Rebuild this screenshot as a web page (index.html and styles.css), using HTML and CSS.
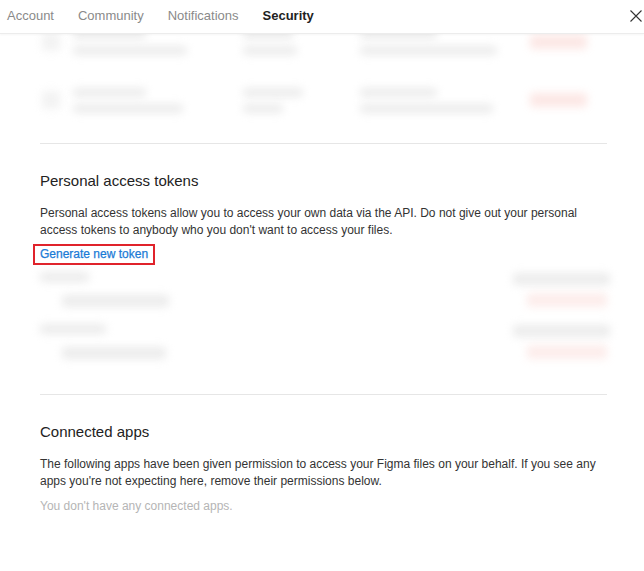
FILE: index.html
```html
<!DOCTYPE html>
<html>
<head>
  <title>Settings - Security</title>
  <link rel="stylesheet" href="styles.css">
</head>
<body>
  <header class="topbar">
    <nav class="tabs">
      <a class="tab">Account</a>
      <a class="tab">Community</a>
      <a class="tab">Notifications</a>
      <a class="tab active">Security</a>
    </nav>
    <button class="close" aria-label="Close">
      <svg width="12" height="12" viewBox="0 0 12 12">
        <path d="M0.5 0.5 L11.5 11.5 M11.5 0.5 L0.5 11.5" stroke="#333" stroke-width="1.1" fill="none"/>
      </svg>
    </button>
  </header>

  <main class="scroller">
    <div class="content">
      <!-- login sessions, blurred in the capture -->
      <div class="sessions">
        <div class="session-row">
          <div class="cell first">
            <span class="blob icon"></span>
            <div class="lines">
              <span class="blob w73"></span>
              <span class="blob w114"></span>
            </div>
          </div>
          <div class="cell">
            <div class="lines">
              <span class="blob w50"></span>
              <span class="blob w54"></span>
            </div>
          </div>
          <div class="cell">
            <div class="lines">
              <span class="blob w77"></span>
              <span class="blob w137"></span>
            </div>
          </div>
          <div class="cell">
            <span class="blob pill"></span>
          </div>
        </div>
        <div class="session-row">
          <div class="cell first">
            <span class="blob icon"></span>
            <div class="lines">
              <span class="blob w73"></span>
              <span class="blob w110"></span>
            </div>
          </div>
          <div class="cell">
            <div class="lines">
              <span class="blob w60"></span>
              <span class="blob w40"></span>
            </div>
          </div>
          <div class="cell">
            <div class="lines">
              <span class="blob w77"></span>
              <span class="blob w133"></span>
            </div>
          </div>
          <div class="cell">
            <span class="blob pill"></span>
          </div>
        </div>
      </div>

      <section class="section">
        <h2>Personal access tokens</h2>
        <p>Personal access tokens allow you to access your own data via the API. Do not give out your personal access tokens to anybody who you don't want to access your files.</p>
        <a class="link-btn">Generate new token</a>

        <div class="tokens">
          <div class="token-row">
            <div class="token-info">
              <span class="blob label w49"></span>
              <span class="blob sub w107"></span>
            </div>
            <div class="token-actions">
              <span class="blob meta"></span>
              <span class="blob revoke"></span>
            </div>
          </div>
          <div class="token-row">
            <div class="token-info">
              <span class="blob label w66"></span>
              <span class="blob sub w104"></span>
            </div>
            <div class="token-actions">
              <span class="blob meta"></span>
              <span class="blob revoke"></span>
            </div>
          </div>
        </div>
      </section>

      <section class="section">
        <h2>Connected apps</h2>
        <p>The following apps have been given permission to access your Figma files on your behalf. If you see any apps you're not expecting here, remove their permissions below.</p>
        <p class="empty">You don't have any connected apps.</p>
      </section>
    </div>
  </main>
</body>
</html>
```

FILE: styles.css
```css
html, body {
  margin: 0;
  height: 100%;
}

body {
  font-family: "Liberation Sans", Arial, sans-serif;
  color: #333;
  background-color: #fff;
  display: flex;
  flex-direction: column;
  overflow: hidden;
}

.topbar {
  position: relative;
  z-index: 2;
  display: flex;
  align-items: center;
  height: 34px;
  box-sizing: border-box;
  padding: 0 2px 2px 7px;
  background-color: #fff;
  border-bottom: 1px solid #ececec;
  box-shadow: 0 1px 2px rgba(0, 0, 0, 0.04);
}

.tabs {
  display: flex;
  gap: 24px;
}

.tab {
  font-size: 13px;
  color: #8a8a8a;
  cursor: pointer;
}

.tab.active {
  color: #222;
  font-weight: bold;
}

.close {
  margin-left: auto;
  padding: 0;
  border: none;
  background: none;
  width: 12px;
  height: 12px;
  display: flex;
  cursor: pointer;
}

.scroller {
  flex: 1;
  overflow: hidden;
}

.content {
  margin-top: -21px;
  padding: 0 37px 0 40px;
}

/* blurred placeholders */
.blob {
  display: block;
  background-color: #d9d9d9;
  border-radius: 3px;
  filter: blur(4px);
  opacity: 0.5;
}

.sessions {
  margin-bottom: 14px;
}

.session-row {
  display: grid;
  grid-template-columns: 203px 117px 170px 1fr;
  align-items: center;
  height: 58px;
}

.cell {
  display: flex;
  align-items: center;
}

.cell.first {
  gap: 13px;
  padding-left: 2px;
}

.lines {
  display: flex;
  flex-direction: column;
  gap: 7px;
}

.lines .blob {
  height: 9px;
}

.blob.icon {
  width: 18px;
  height: 18px;
  background-color: #e6e6e6;
}

.blob.pill {
  width: 57px;
  height: 14px;
  background-color: #f8c4be;
  opacity: 0.4;
}

.w40 { width: 40px; }
.w49 { width: 49px; }
.w50 { width: 50px; }
.w54 { width: 54px; }
.w60 { width: 60px; }
.w66 { width: 66px; }
.w73 { width: 73px; }
.w77 { width: 77px; }
.w104 { width: 104px; }
.w107 { width: 107px; }
.w110 { width: 110px; }
.w114 { width: 114px; }
.w133 { width: 133px; }
.w137 { width: 137px; }

.section {
  border-top: 1px solid #e6e6e6;
  padding: 27px 0 20px;
}

h2 {
  margin: 0;
  font-size: 15px;
  line-height: 20px;
  font-weight: normal;
  color: #222;
}

p {
  margin: 14px 0 0;
  font-size: 12px;
  line-height: 17px;
}

.link-btn {
  display: inline-block;
  margin: 5px 0 0 -7px;
  padding: 1px 5px;
  border: 2px solid #e0232b;
  font-size: 12px;
  line-height: 15px;
  color: #1b7bd6;
  -webkit-text-stroke: 0.25px #1b7bd6;
  cursor: pointer;
}

.tokens {
  margin-top: 5px;
}

.token-row {
  display: flex;
  justify-content: space-between;
  height: 52px;
}

.token-info {
  display: flex;
  flex-direction: column;
}

.token-info .label {
  height: 10px;
  margin-top: 2px;
}

.token-info .sub {
  height: 12px;
  margin: 13px 0 0 22px;
}

.token-actions {
  display: flex;
  flex-direction: column;
  align-items: flex-end;
}

.token-actions .meta {
  width: 97px;
  height: 12px;
  margin: 3px -3px 0 0;
}

.token-actions .revoke {
  width: 80px;
  height: 14px;
  margin-top: 8px;
  background-color: #f8cbc6;
  opacity: 0.35;
}

.empty {
  margin-top: 8px;
  color: #b5b5b5;
}
```
